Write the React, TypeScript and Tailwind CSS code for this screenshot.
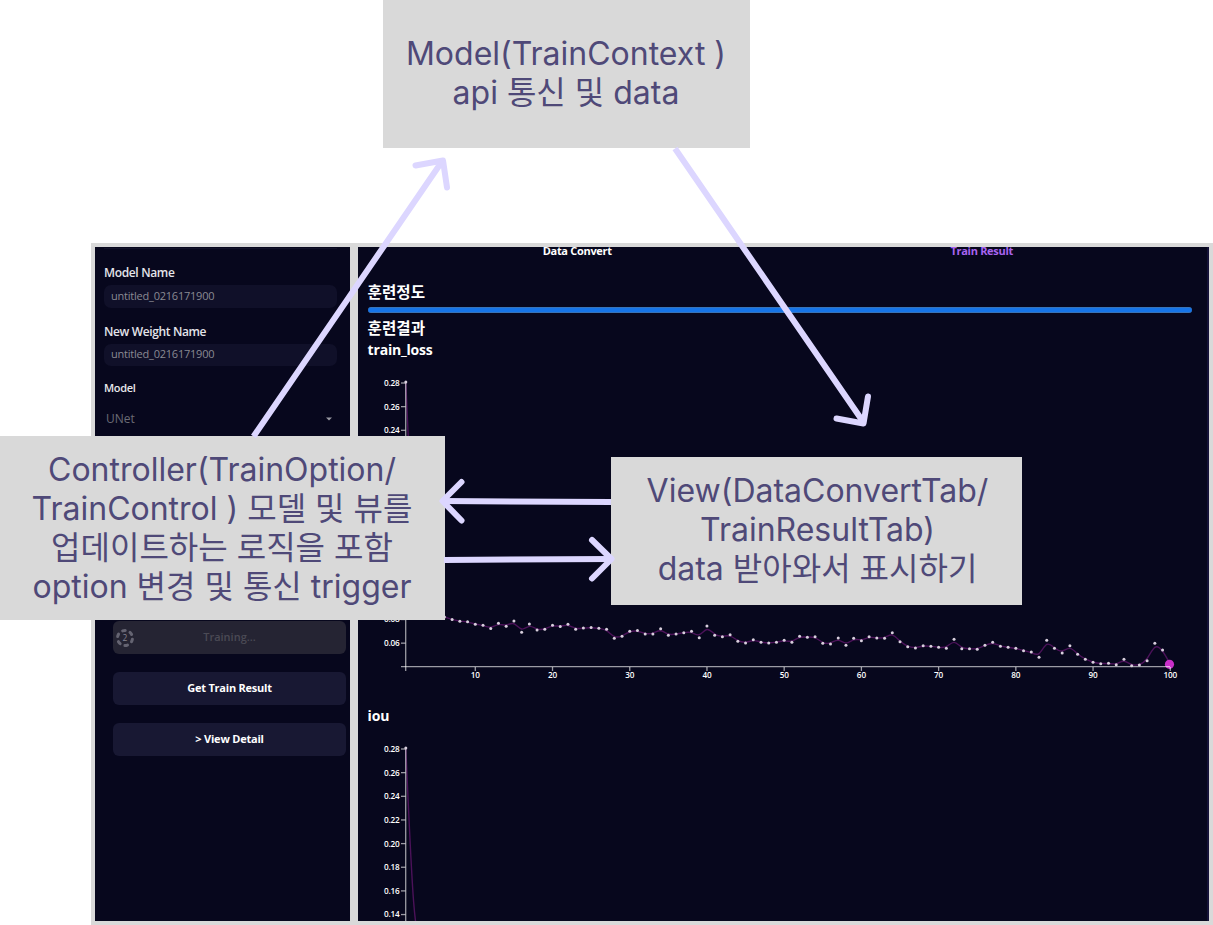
import React from "react";

type Point = [number, number];

// Vertical offsets (px) from the top of the plot, one per epoch starting at 1.
const LOSS: number[] = [
  0, 178, 203, 220, 230, 235, 237.5, 239.3, 239.7, 242.3, 243.3, 246.6, 241.3, 244.3, 239, 250.3, 242, 248, 247.3,
  243.3, 244.6, 242.3, 247.3, 246, 245.6, 246.3, 247.3, 256.3, 254.3, 249.3, 248.6, 252, 252, 246.8, 253.3, 252,
  250.7, 249.3, 255.7, 244, 253.3, 254.7, 252.7, 259.3, 261, 257.7, 260.3, 261, 260.3, 258.3, 260.3, 254.3, 255.3,
  254.7, 261.3, 262, 256, 263.3, 256.3, 258.7, 254.7, 256, 256.3, 250.7, 259.7, 264.7, 266, 263.7, 264.3, 265.3,
  266.3, 257.3, 266.7, 266.7, 267.3, 263.3, 260.3, 264.3, 265.3, 266.3, 268.7, 270, 275.3, 258.3, 266.3, 271, 263.7,
  272.3, 277.3, 280.3, 281.7, 281.3, 282.7, 277.3, 283.7, 283, 278.7, 261.3, 268, 282.3,
];

const STEP = 7.722;
const LEFT = 37.8;
const TOP = 9;

const points: Point[] = LOSS.map((y, i) => [LEFT + i * STEP, TOP + y]);

// Uniform cubic B-spline through the control points, clamped at both ends.
function basisPath(p: Point[]): string {
  const n = p.length;
  const mix = (a: Point, b: Point, t: number): Point => [a[0] + (b[0] - a[0]) * t, a[1] + (b[1] - a[1]) * t];
  const knot = (i: number): Point =>
    i === 0 || i === n - 1
      ? p[i]
      : [(p[i - 1][0] + 4 * p[i][0] + p[i + 1][0]) / 6, (p[i - 1][1] + 4 * p[i][1] + p[i + 1][1]) / 6];
  const f = (q: Point) => q[0].toFixed(2) + "," + q[1].toFixed(2);
  let d = "M" + f(p[0]);
  for (let i = 0; i < n - 1; i++) {
    d += "C" + f(mix(p[i], p[i + 1], 1 / 3)) + " " + f(mix(p[i], p[i + 1], 2 / 3)) + " " + f(knot(i + 1));
  }
  return d;
}

const yTicks = Array.from({ length: 12 }, (_, i) => ({ label: (0.28 - i * 0.02).toFixed(2), y: 10 + i * 23.65 }));
const xTicks = Array.from({ length: 10 }, (_, i) => ({ label: String((i + 1) * 10), x: LEFT + (i * 10 + 9) * STEP }));

const LOSS_LABELS = ["0.28", "0.26", "0.24", "0.08", "0.06"];
const IOU_LABELS = ["0.28", "0.26", "0.24", "0.22", "0.20", "0.18", "0.16", "0.14"];

function Chart({ labels, epochs }: { labels: string[]; epochs: boolean }) {
  const last = points[points.length - 1];
  return (
    <svg width="824" height="316" className="block shrink-0 overflow-visible font-['Open_Sans',sans-serif]">
      <path d={basisPath(points)} fill="none" stroke="#4b1259" strokeWidth="1.4" />
      <circle cx={last[0] - 0.8} cy={last[1]} r="4.6" fill="#c92fc9" />
      <g stroke="#fff" strokeOpacity="0.6" strokeWidth="1.3">
        <path d="M37.7 9V298" />
        <path d="M33 293.7H802" />
        {yTicks.map((t) => (
          <path key={t.label} d={`M33 ${t.y}H37.5`} />
        ))}
        {xTicks.map((t) => (
          <path key={t.label} d={`M${t.x} 294V298`} />
        ))}
      </g>
      {points.slice(0, -1).map((q, i) => (
        <circle key={i} cx={q[0]} cy={q[1]} r="1.5" fill="#d8cfdd" />
      ))}
      <g fill="#fff" fontSize="8.2" fontWeight="600" letterSpacing="-0.15">
        {yTicks
          .filter((t) => labels.includes(t.label))
          .map((t) => (
            <text key={t.label} x="31.6" y={t.y + 2.9} textAnchor="end">
              {t.label}
            </text>
          ))}
        {epochs &&
          xTicks.map((t) => (
            <text key={t.label} x={t.x} y="305.3" textAnchor="middle">
              {t.label}
            </text>
          ))}
      </g>
    </svg>
  );
}

function Sidebar() {
  return (
    <aside className="flex w-[255px] shrink-0 flex-col overflow-hidden bg-[#07071d] text-white">
      <div className="ml-[9px] mt-px h-px w-[233px] shrink-0 bg-[#111129]" />
      <div className="ml-[9px] flex w-[233px] flex-col">
        <div className="mt-4 h-4 text-[12px] font-semibold leading-4 tracking-[-0.35px] text-[#e4e4ea]">Model Name</div>
        <div className="mt-1 flex h-[23px] items-center rounded-[7px] bg-[#101029] pl-[7px] text-[11px] tracking-[-0.22px] text-[#8a8a93]">
          untitled_0216171900
        </div>
        <div className="mt-4 h-4 text-[12px] font-semibold leading-4 tracking-[-0.37px] text-[#e4e4ea]">New Weight Name</div>
        <div className="mt-1 flex h-[22px] items-center rounded-[7px] bg-[#101029] pb-0.5 pl-[7px] text-[11px] tracking-[-0.22px] text-[#8a8a93]">
          untitled_0216171900
        </div>
        <div className="mt-[14px] h-4 text-[11px] font-semibold leading-4 tracking-[-0.35px] text-[#e8e8ec]">Model</div>
        <div className="mt-[15px] flex h-4 items-center justify-between pl-[2px] pr-[5px] text-[12px] leading-4 text-[#6b6b75]">
          <span>UNet</span>
          <svg width="6" height="4" viewBox="0 0 6 4">
            <path d="M0 .5h6L3 3.5z" fill="#9a9aa3" />
          </svg>
        </div>
      </div>
      <div className="ml-[18px] mt-[194px] flex w-[233px] flex-col gap-[18px] text-[11px] font-bold">
        <div className="grid h-[33px] grid-cols-[24px_1fr_24px] items-center rounded-[6px] bg-[#252433] text-center font-semibold text-[#4b4a55]">
          <svg width="24" height="24" viewBox="0 0 24 24" fill="none">
            <circle
              cx="12"
              cy="12"
              r="7.5"
              stroke="#656472"
              strokeWidth="3"
              strokeLinecap="round"
              strokeDasharray="2.6 5.254"
              transform="rotate(10 12 12)"
            />
            <text x="12" y="15" textAnchor="middle" fontSize="8.5" fontWeight="400" fill="#848390">
              2
            </text>
          </svg>
          <span>Training...</span>
        </div>
        <button className="h-[33px] rounded-[6px] bg-[#181833] tracking-[-0.22px]">Get Train Result</button>
        <button className="h-[33px] rounded-[6px] bg-[#181833] tracking-[-0.22px]">&gt; View Detail</button>
      </div>
    </aside>
  );
}

function Results() {
  return (
    <main className="flex min-w-0 flex-1 flex-col overflow-hidden border-r-2 border-[#151238] bg-[#07071d] pl-[9.6px] text-white">
      <div className="ml-[7.4px] grid h-[10px] w-[809px] shrink-0 grid-cols-2 text-center text-[11px] font-bold leading-[8px] tracking-[-0.3px]">
        <span>Data Convert</span>
        <span className="text-[#a864f0]">Train Result</span>
      </div>
      <h2 className="mt-[25px] h-5 shrink-0 text-[15.6px] font-bold leading-5">훈련정도</h2>
      <div className="ml-[0.4px] mt-[5px] h-[6px] w-[824px] shrink-0 rounded-full border-y border-[#3873b8] bg-[#1674e8]" />
      <h2 className="mt-[5px] h-5 shrink-0 text-[15.6px] font-bold leading-5">훈련결과</h2>
      <h3 className="mt-[2px] h-5 shrink-0 text-[14px] font-bold leading-5 tracking-[-0.2px]">train_loss</h3>
      <div className="ml-[0.4px] mt-[13px] flex shrink-0">
        <Chart labels={LOSS_LABELS} epochs />
      </div>
      <h3 className="mt-[17px] h-5 shrink-0 text-[14px] font-bold leading-5 tracking-[-0.2px]">iou</h3>
      <div className="ml-[0.4px] mt-[13px] flex shrink-0">
        <Chart labels={IOU_LABELS} epochs={false} />
      </div>
    </main>
  );
}

export default function App() {
  return (
    <div className="relative h-[925px] w-[1213px] overflow-hidden bg-white pl-[91px] pt-[243px]">
      <div className="flex h-[682px] w-[1122px] gap-2 bg-[#d9d9d9] p-1 font-['Open_Sans','Noto_Sans_CJK_KR',sans-serif]">
        <Sidebar />
        <Results />
      </div>

      <div className="font-['Inter','Noto_Sans_CJK_KR',sans-serif] text-[32px] font-normal leading-[39px] text-[#4f4978]">
        <div className="absolute left-[383px] top-0 flex h-[148px] w-[367px] flex-col items-center justify-center whitespace-nowrap bg-[#d9d9d9] pb-[3px] pr-px">
          <span>Model(TrainContext )</span>
          <span>api 통신 및 data</span>
        </div>
        <div className="absolute left-0 top-[436px] flex h-[184px] w-[445px] flex-col items-center justify-center whitespace-nowrap bg-[#d9d9d9] pr-px">
          <span>Controller(TrainOption/</span>
          <span>TrainControl ) 모델 및 뷰를</span>
          <span>업데이트하는 로직을 포함</span>
          <span>option 변경 및 통신 trigger</span>
        </div>
        <div className="absolute left-[611px] top-[457px] flex h-[148px] w-[411px] flex-col items-center justify-center whitespace-nowrap bg-[#d9d9d9] pb-[3px] pl-[2px]">
          <span>View(DataConvertTab/</span>
          <span>TrainResultTab)</span>
          <span>data 받아와서 표시하기</span>
        </div>
      </div>

      <svg className="pointer-events-none absolute left-0 top-0" width="1213" height="925" fill="none" stroke="#dcd6ff" strokeWidth="6">
        <path d="M253.5 436.5 443 160M675 148.5 864 423M611 502 443 501M444 560 612 559" />
        <g strokeLinecap="round" strokeLinejoin="round">
          <path d="M415.5 165.5 443 160.5 447 187.5" />
          <path d="M836.5 418.5 863.5 423.5 868 396.5" />
          <path d="M461.5 482 442.5 501 461.5 520.5" />
          <path d="M592 540 611.5 559 592 578.5" />
        </g>
      </svg>
    </div>
  );
}
